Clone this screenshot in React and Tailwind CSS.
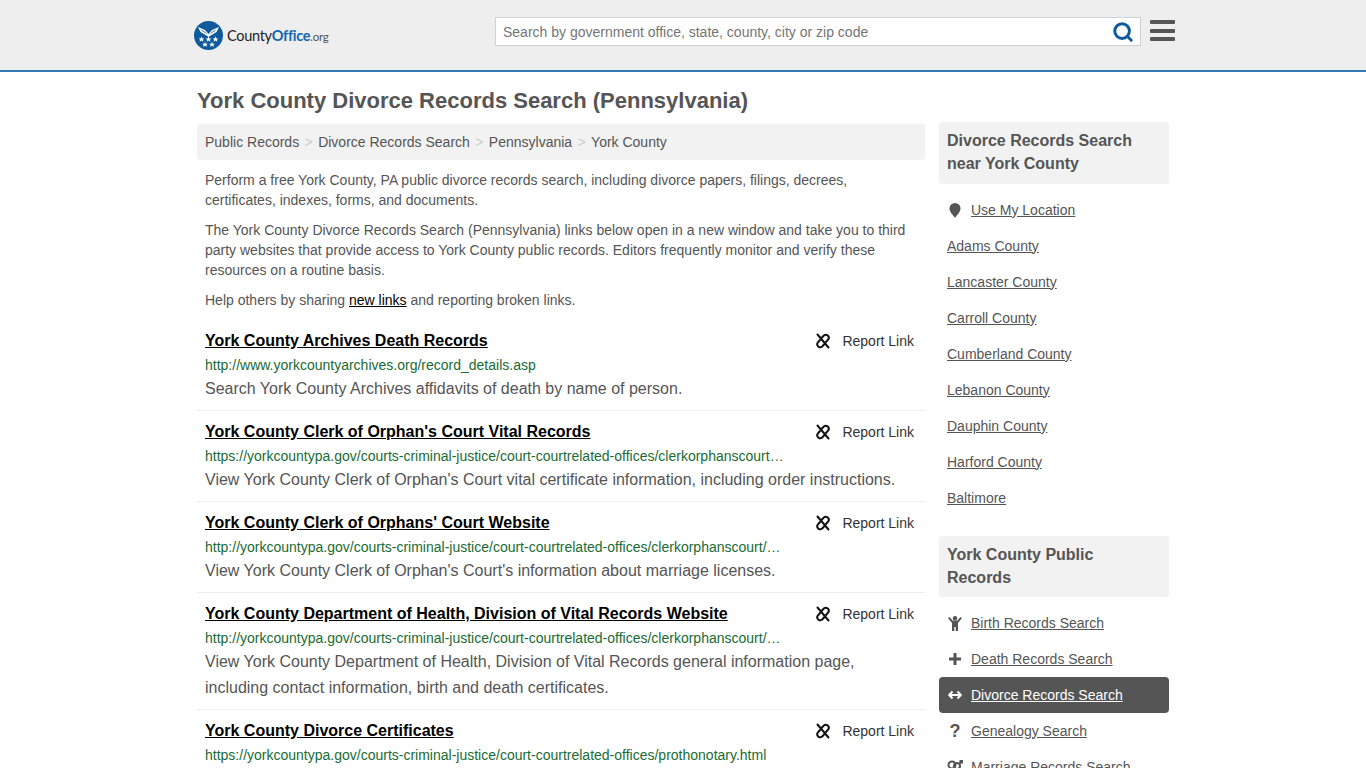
import { Search } from 'lucide-react';

const results = [
  {
    title: 'York County Archives Death Records',
    url: 'http://www.yorkcountyarchives.org/record_details.asp',
    desc: 'Search York County Archives affidavits of death by name of person.',
  },
  {
    title: "York County Clerk of Orphan's Court Vital Records",
    url: 'https://yorkcountypa.gov/courts-criminal-justice/court-courtrelated-offices/clerkorphanscourt/vital-records.html',
    desc: "View York County Clerk of Orphan's Court vital certificate information, including order instructions.",
  },
  {
    title: "York County Clerk of Orphans' Court Website",
    url: 'http://yorkcountypa.gov/courts-criminal-justice/court-courtrelated-offices/clerkorphanscourt/marriage-licenses.html',
    desc: "View York County Clerk of Orphan's Court's information about marriage licenses.",
  },
  {
    title: 'York County Department of Health, Division of Vital Records Website',
    url: 'http://yorkcountypa.gov/courts-criminal-justice/court-courtrelated-offices/clerkorphanscourt/vital-records.html',
    desc: 'View York County Department of Health, Division of Vital Records general information page, including contact information, birth and death certificates.',
  },
  {
    title: 'York County Divorce Certificates',
    url: 'https://yorkcountypa.gov/courts-criminal-justice/court-courtrelated-offices/prothonotary.html',
    desc: 'View York County Prothonotary divorce certificate information.',
  },
];

const nearby = [
  'Adams County',
  'Lancaster County',
  'Carroll County',
  'Cumberland County',
  'Lebanon County',
  'Dauphin County',
  'Harford County',
  'Baltimore',
];

function Logo() {
  return (
    <div className="flex items-center">
      <svg width="29" height="29" viewBox="0 0 29 29" className="shrink-0">
        <circle cx="14.5" cy="14.5" r="14.5" fill="#0f5a9c" />
        <path d="M4 6l7 3 3.500 4 3.500-4 7-3-2.500 5-5 3-3 2-3-2-5-3z" fill="#fff" />
        <path d="M7.500 9l5 3.500M21.500 9l-5 3.500" stroke="#0f5a9c" strokeWidth="0.8" />
        <path d="M7.500 15.500l.9 1.900h2l-1.500 1.300.5 2-1.900-1.100-1.900 1.100.5-2-1.500-1.300h2zM14.500 15.500l.9 1.900h2L15.900 18.700l.5 2-1.900-1.100-1.900 1.100.5-2-1.500-1.300h2zM21.500 15.500l.9 1.900h2l-1.500 1.300.5 2-1.900-1.100-1.900 1.100.5-2-1.500-1.300h2zM11 21l.9 1.700h1.900l-1.400 1.200.5 1.900-1.900-1-1.900 1 .5-1.900-1.400-1.200h1.900zM18 21l.9 1.700h1.900l-1.400 1.200.5 1.900-1.900-1-1.900 1 .5-1.900-1.400-1.200h1.900z" fill="#fff" />
      </svg>
      <span className="ml-[4px] font-['Lato',sans-serif] text-[14.500px] tracking-[-0.3px] text-[#222]">
        County<span className="font-bold text-[#1467b0]">Office</span>
        <span className="text-[11.500px] text-[#555]">.org</span>
      </span>
    </div>
  );
}

function ReportIcon() {
  return (
    <svg width="16" height="16" viewBox="0 0 16 16" fill="none" stroke="#111" strokeWidth="2" strokeLinecap="round" className="shrink-0">
      <path d="M2.500 1.500L13.500 14.500" />
      <path d="M6.500 5l2.300-2.500a3 3 0 0 1 4.400 4L11 9" />
      <path d="M9.500 11l-2.300 2.500a3 3 0 0 1-4.400-4L5 7" />
    </svg>
  );
}

function SideLink({ icon, children, active }) {
  return (
    <div className={`flex h-[36px] items-center rounded px-2 ${active ? 'bg-[#555] text-white' : 'text-[#555]'}`}>
      <span className={`flex w-4 justify-center ${active ? 'text-white' : 'text-[#555]'}`}>{icon}</span>
      <a href="#" className="ml-2 underline">{children}</a>
    </div>
  );
}

export default function App() {
  return (
    <div className="h-[768px] overflow-hidden bg-white font-['Liberation_Sans',Arial,sans-serif] text-[14px] text-[#555]">
      <header className="h-[72px] border-b-2 border-[#337ab7] bg-[#eee]">
        <div className="mx-auto flex w-[972px] items-start">
          <div className="mt-[21px] -ml-[3px] w-[301px] shrink-0"><Logo /></div>
          <div className="mt-[17px] flex h-[29px] w-[646px] shrink-0 items-center border border-[#ccd3da] bg-white pr-[6px] pl-[7px]">
            <span className="flex-1 pt-[1px] text-[14px] text-[#757575]">Search by government office, state, county, city or zip code</span>
            <Search size={22} strokeWidth={3.2} className="text-[#0f5a9c]" />
          </div>
          <div className="mt-[20px] ml-[9px] flex w-[25px] shrink-0 flex-col gap-[4.500px]">
            <div className="h-[4px] rounded-[1px] bg-[#555]"></div>
            <div className="h-[4px] rounded-[1px] bg-[#555]"></div>
            <div className="h-[4px] rounded-[1px] bg-[#555]"></div>
          </div>
        </div>
      </header>

      <main className="mx-auto flex w-[972px] items-start">
        <div className="w-[728px] shrink-0">
          <h1 className="mt-[16px] text-[22px] leading-[26px] font-bold text-[#555]">York County Divorce Records Search (Pennsylvania)</h1>
          <div className="mt-[10px] flex h-[36px] items-center rounded-[3px] bg-[#f2f2f2] px-2">
            <span>Public Records</span>
            <span className="px-[5.400px] text-[#ccc]">&gt;</span>
            <span>Divorce Records Search</span>
            <span className="px-[5.400px] text-[#ccc]">&gt;</span>
            <span>Pennsylvania</span>
            <span className="px-[5.400px] text-[#ccc]">&gt;</span>
            <span>York County</span>
          </div>

          <div className="px-2 pt-[10px] leading-[20px]">
            <p>Perform a free York County, PA public divorce records search, including divorce papers, filings, decrees, certificates, indexes, forms, and documents.</p>
            <p className="mt-[10px]">The York County Divorce Records Search (Pennsylvania) links below open in a new window and take you to third party websites that provide access to York County public records. Editors frequently monitor and verify these resources on a routine basis.</p>
            <p className="mt-[10px]">Help others by sharing <a href="#" className="text-black underline">new links</a> and reporting broken links.</p>
          </div>

          <div className="mt-[10px]">
            {results.map((r) => (
              <div key={r.title} className="border-b border-[#eee] px-2 pt-[9px] pb-[8px]">
                <div className="flex h-[24px] items-center justify-between">
                  <a href="#" className="text-[16px] font-bold text-black underline">{r.title}</a>
                  <div className="flex items-center pr-[3px] text-[#333]">
                    <ReportIcon />
                    <span className="ml-[11px]">Report Link</span>
                  </div>
                </div>
                <div className="mt-[2px] w-[581px] truncate leading-[20px] text-[#1a6b34]">{r.url}</div>
                <p className="mt-[1px] text-[16px] leading-[26px] text-[#555]">{r.desc}</p>
              </div>
            ))}
          </div>
        </div>

        <aside className="mt-[50px] ml-[14px] w-[230px] shrink-0">
          <div className="rounded-[3px] bg-[#f2f2f2] px-2 py-[7px] pb-[9px] text-[16px] leading-[23px] font-bold">Divorce Records Search near York County</div>
          <div className="mt-[8px]">
            <SideLink icon={<svg width="12" height="15" viewBox="0 0 12 15"><path d="M6 0a5.500 5.500 0 0 1 5.500 5.500C11.500 9 8 12 6 15 4 12 .5 9 .5 5.500A5.500 5.500 0 0 1 6 0z" fill="#555" /></svg>}>Use My Location</SideLink>
            {nearby.map((c) => (
              <div key={c} className="flex h-[36px] items-center px-2">
                <a href="#" className="underline">{c}</a>
              </div>
            ))}
          </div>
          <div className="mt-[20px] rounded-[3px] bg-[#f2f2f2] px-2 pt-[7px] pb-[8px] text-[16px] leading-[23px] font-bold">York County Public Records</div>
          <div className="mt-[8px]">
            <SideLink icon={<svg width="14" height="15" viewBox="0 0 14 15"><circle cx="7" cy="2.200" r="2.200" fill="#555" /><path d="M0 2l1.500-1L4.500 4.500h5L12.500 1 14 2l-4 5v8H7.700v-4H6.300v4H4V7z" fill="#555" /></svg>}>Birth Records Search</SideLink>
            <SideLink icon={<svg width="14" height="14" viewBox="0 0 14 14"><path d="M5.500 1h3v4.500H13v3H8.500V13h-3V8.500H1v-3h4.500z" fill="#555" /></svg>}>Death Records Search</SideLink>
            <SideLink active icon={<svg width="14" height="10" viewBox="0 0 14 10" fill="none" stroke="#fff" strokeWidth="2"><path d="M1.500 5h11M4.500 1.500L1.200 5l3.300 3.500M9.500 1.500L12.800 5 9.500 8.500" /></svg>}>Divorce Records Search</SideLink>
            <SideLink icon={<span className="text-[18px] leading-none font-bold">?</span>}>Genealogy Search</SideLink>
            <SideLink icon={<svg width="16" height="14" viewBox="0 0 16 14" fill="none" stroke="#555" strokeWidth="2"><circle cx="5" cy="5" r="3.500" /><path d="M5 9v5M3 12h4" /><circle cx="10" cy="6" r="3" /><path d="M12 4l3-3M12.500 1H15v2.500" /></svg>}>Marriage Records Search</SideLink>
          </div>
        </aside>
      </main>
    </div>
  );
}
